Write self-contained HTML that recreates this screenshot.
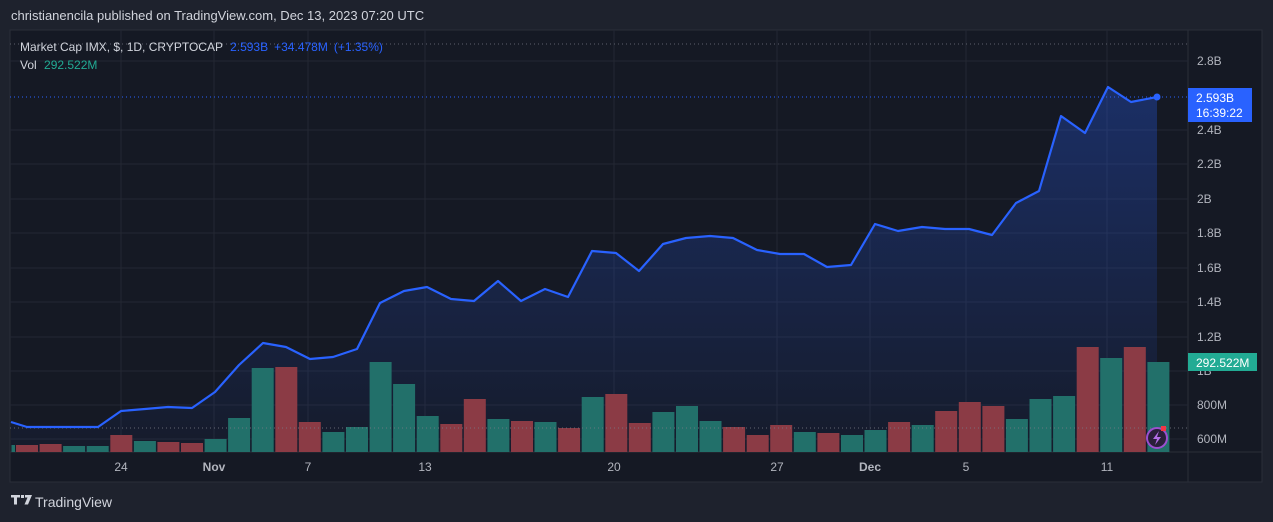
<!DOCTYPE html>
<html><head><meta charset="utf-8"><style>
html,body{margin:0;padding:0;background:#1e222d;width:1273px;height:522px;overflow:hidden;font-family:"Liberation Sans",sans-serif}
.t{position:absolute;color:#d1d4dc;font-size:13px;white-space:nowrap}
</style></head><body>
<div class="t" style="left:11px;top:8px;font-size:13px;color:#d1d4dc">christianencila published on TradingView.com, Dec 13, 2023 07:20 UTC</div>
<svg width="1273" height="522" style="position:absolute;left:0;top:0" xmlns="http://www.w3.org/2000/svg" font-family="Liberation Sans, sans-serif">
<defs><linearGradient id="g" x1="0" y1="0" x2="0" y2="1"><stop offset="0" stop-color="#2962ff" stop-opacity="0.3"/><stop offset="1" stop-color="#2962ff" stop-opacity="0.03"/></linearGradient></defs>
<rect x="10" y="30" width="1252" height="452" fill="#151924"/>
<rect x="10" y="30" width="1252" height="452" fill="none" stroke="#2a2e39"/>
<line x1="1188" y1="30" x2="1188" y2="482" stroke="#2a2e39"/>
<line x1="10" y1="452" x2="1262" y2="452" stroke="#2a2e39"/>
<g stroke="#232733" stroke-width="1">
<line x1="10" x2="1188" y1="61" y2="61"/><line x1="10" x2="1188" y1="130" y2="130"/><line x1="10" x2="1188" y1="164" y2="164"/><line x1="10" x2="1188" y1="199" y2="199"/><line x1="10" x2="1188" y1="233" y2="233"/><line x1="10" x2="1188" y1="268" y2="268"/><line x1="10" x2="1188" y1="302" y2="302"/><line x1="10" x2="1188" y1="337" y2="337"/><line x1="10" x2="1188" y1="371" y2="371"/><line x1="10" x2="1188" y1="405" y2="405"/><line x1="10" x2="1188" y1="439" y2="439"/>
<line y1="30" y2="452" x1="121" x2="121"/><line y1="30" y2="452" x1="214" x2="214"/><line y1="30" y2="452" x1="308" x2="308"/><line y1="30" y2="452" x1="425" x2="425"/><line y1="30" y2="452" x1="614" x2="614"/><line y1="30" y2="452" x1="777" x2="777"/><line y1="30" y2="452" x1="870" x2="870"/><line y1="30" y2="452" x1="966" x2="966"/><line y1="30" y2="452" x1="1107" x2="1107"/>
</g>
<line x1="10" x2="1188" y1="44" y2="44" stroke="#5d606b" stroke-dasharray="1 3"/>
<polygon fill="url(#g)" points="11,422 27,427 51,427 74,427 98,427 121,411 145,409 168,407 192,408 215,392 239,365 263,343 286,347 310,359 333,357 357,349 380,303 404,291 427,287 451,299 474,301 498,281 521,301 545,289 568,297 592,251 616,253 639,271 663,244 686,238 710,236 733,238 757,250 780,254 804,254 827,267 851,265 875,224 898,231 922,227 945,229 969,229 992,235 1016,203 1039,191 1061,116 1085,133 1108,87 1131,102 1157,97 1157,452 11,452"/>
<g fill="#8b3b45">
<rect x="16" y="445" width="22" height="7"/><rect x="39.6" y="444" width="22" height="8"/><rect x="110.3" y="435" width="22" height="17"/><rect x="157.4" y="442" width="22" height="10"/><rect x="181" y="443" width="22" height="9"/><rect x="275.3" y="367" width="22" height="85"/><rect x="298.8" y="422" width="22" height="30"/><rect x="440.3" y="424" width="22" height="28"/><rect x="463.8" y="399" width="22" height="53"/><rect x="511" y="421" width="22" height="31"/><rect x="558.1" y="428" width="22" height="24"/><rect x="605.3" y="394" width="22" height="58"/><rect x="628.8" y="423" width="22" height="29"/><rect x="723.1" y="427" width="22" height="25"/><rect x="746.7" y="435" width="22" height="17"/><rect x="770.2" y="425" width="22" height="27"/><rect x="817.4" y="433" width="22" height="19"/><rect x="888.1" y="422" width="22" height="30"/><rect x="935.2" y="411" width="22" height="41"/><rect x="958.8" y="402" width="22" height="50"/><rect x="982.4" y="406" width="22" height="46"/><rect x="1076.7" y="347" width="22" height="105"/><rect x="1123.8" y="347" width="22" height="105"/>
</g>
<g fill="#22706a">
<rect x="11.5" y="445" width="3.5" height="7"/><rect x="63.1" y="446" width="22" height="6"/><rect x="86.7" y="446" width="22" height="6"/><rect x="133.9" y="441" width="22" height="11"/><rect x="204.6" y="439" width="22" height="13"/><rect x="228.1" y="418" width="22" height="34"/><rect x="251.7" y="368" width="22" height="84"/><rect x="322.4" y="432" width="22" height="20"/><rect x="346" y="427" width="22" height="25"/><rect x="369.6" y="362" width="22" height="90"/><rect x="393.1" y="384" width="22" height="68"/><rect x="416.7" y="416" width="22" height="36"/><rect x="487.4" y="419" width="22" height="33"/><rect x="534.5" y="422" width="22" height="30"/><rect x="581.7" y="397" width="22" height="55"/><rect x="652.4" y="412" width="22" height="40"/><rect x="676" y="406" width="22" height="46"/><rect x="699.5" y="421" width="22" height="31"/><rect x="793.8" y="432" width="22" height="20"/><rect x="841" y="435" width="22" height="17"/><rect x="864.5" y="430" width="22" height="22"/><rect x="911.7" y="425" width="22" height="27"/><rect x="1005.9" y="419" width="22" height="33"/><rect x="1029.5" y="399" width="22" height="53"/><rect x="1053.1" y="396" width="22" height="56"/><rect x="1100.2" y="358" width="22" height="94"/><rect x="1147.4" y="362" width="22" height="90"/>
</g>
<line x1="10" x2="1188" y1="428" y2="428" stroke="#787b86" stroke-dasharray="1 3" opacity="0.8"/>
<line x1="10" x2="1188" y1="97" y2="97" stroke="#2962ff" stroke-dasharray="1 3"/>
<polyline fill="none" stroke="#2962ff" stroke-width="2.2" stroke-linejoin="round" points="11,422 27,427 51,427 74,427 98,427 121,411 145,409 168,407 192,408 215,392 239,365 263,343 286,347 310,359 333,357 357,349 380,303 404,291 427,287 451,299 474,301 498,281 521,301 545,289 568,297 592,251 616,253 639,271 663,244 686,238 710,236 733,238 757,250 780,254 804,254 827,267 851,265 875,224 898,231 922,227 945,229 969,229 992,235 1016,203 1039,191 1061,116 1085,133 1108,87 1131,102 1157,97"/>
<circle cx="1157" cy="97" r="3.5" fill="#2962ff"/>
<g fill="#b2b5be" font-size="12">
<text x="1197" y="65">2.8B</text><text x="1197" y="134">2.4B</text><text x="1197" y="168">2.2B</text><text x="1197" y="203">2B</text><text x="1197" y="237">1.8B</text><text x="1197" y="272">1.6B</text><text x="1197" y="306">1.4B</text><text x="1197" y="341">1.2B</text><text x="1197" y="375">1B</text><text x="1197" y="409">800M</text><text x="1197" y="443">600M</text>
<text x="121" y="471" text-anchor="middle">24</text><text x="214" y="471" text-anchor="middle" font-weight="bold">Nov</text><text x="308" y="471" text-anchor="middle">7</text><text x="425" y="471" text-anchor="middle">13</text><text x="614" y="471" text-anchor="middle">20</text><text x="777" y="471" text-anchor="middle">27</text><text x="870" y="471" text-anchor="middle" font-weight="bold">Dec</text><text x="966" y="471" text-anchor="middle">5</text><text x="1107" y="471" text-anchor="middle">11</text>
</g>
<rect x="1188" y="88" width="64" height="34" fill="#2962ff"/>
<text x="1196" y="102" fill="#fff" font-size="12">2.593B</text><text x="1196" y="117" fill="#fff" font-size="12">16:39:22</text>
<rect x="1188" y="353" width="69" height="18" fill="#22ab94"/>
<text x="1196" y="367" fill="#fff" font-size="12">292.522M</text>
<circle cx="1157" cy="438" r="10" fill="#2a1f3a" stroke="#9c4fd0" stroke-width="2"/>
<path d="M1159 431 L1153 439 L1157 439 L1155 445 L1161 437 L1157 437 Z" fill="#b36ee6"/>
<rect x="1161" y="426" width="5" height="5" fill="#f23645"/>
<text font-size="12" fill="#d1d4dc" x="20" y="51">Market Cap IMX, $, 1D, CRYPTOCAP <tspan fill="#2962ff" dx="4">2.593B</tspan><tspan fill="#2962ff" dx="6">+34.478M</tspan><tspan fill="#2962ff" dx="6">(+1.35%)</tspan></text>
<text font-size="12" fill="#d1d4dc" x="20" y="69">Vol <tspan fill="#22ab94" dx="4">292.522M</tspan></text>
<path d="M11 495 h9 v2.5 h-3 v7 h-3 v-7 h-3 z M21 495 h3 v3 h-3 z M25 495 h7 l-4 9.5 h-3.5 l3 -7 h-2.5 z" fill="#d1d4dc"/>
<text x="35" y="507" font-size="14" fill="#d1d4dc">TradingView</text>
</svg>
</body></html>
